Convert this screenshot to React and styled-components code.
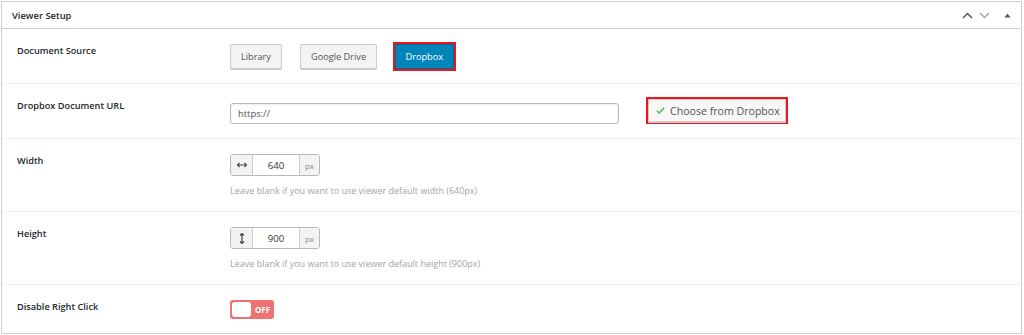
import React from "react";
import styled, { createGlobalStyle } from "styled-components";

const Global = createGlobalStyle`
  html, body { margin: 0; padding: 0; background: #fff; }
  body { font-family: "Open Sans", "Liberation Sans", sans-serif; color: #23282d; }
  * { box-sizing: border-box; }
`;

const Page = styled.div`
  padding: 1px 2px 0 1px;
`;

const Panel = styled.section`
  border: 1px solid #ccd0d4;
  background: #fff;
  width: 1021px;
`;

const Header = styled.header`
  height: 27px;
  border-bottom: 1px solid #ccd0d4;
  display: flex;
  align-items: center;
  justify-content: space-between;
  padding: 0 10px 0 10px;
`;

const Title = styled.h2`
  margin: 0;
  font-size: 9.4px;
  font-weight: 600;
  color: #23282d;
`;

const HeaderTools = styled.div`
  display: flex;
  align-items: center;
  gap: 6px;
`;

const ToolIcon = styled.svg`
  display: block;
  margin-left: ${(p) => p.$ml || 0}px;
`;

const Row = styled.div`
  display: flex;
  align-items: flex-start;
  padding: 15px 0 0 15px;
  border-top: ${(p) => (p.$first ? "none" : "1px solid #f0f0f0")};
  height: ${(p) => p.$h}px;
`;

const Label = styled.div`
  width: 213px;
  flex: none;
  font-size: 9.2px;
  font-weight: 600;
  line-height: 14px;
  color: #23282d;
`;

const Field = styled.div`
  display: flex;
  flex-direction: column;
  align-items: flex-start;
`;

const ButtonGroup = styled.div`
  display: flex;
  align-items: center;
  gap: 18px;
`;

const Marked = styled.div`
  border: 2px solid #f0141b;
  margin: ${(p) => p.$m || "0"};
  display: flex;
`;

const SourceButton = styled.button`
  height: 25px;
  padding: 0 ${(p) => p.$px}px;
  font-family: inherit;
  font-size: 9.2px;
  border-radius: ${(p) => (p.$active ? 0 : 2)}px;
  border: 1px solid ${(p) => (p.$active ? "#006799" : "#ccc")};
  background: ${(p) => (p.$active ? "#0085ba" : "#f3f3f3")};
  color: ${(p) => (p.$active ? "#fff" : "#555")};
  box-shadow: ${(p) => (p.$active ? "none" : "0 1px 0 #ccc")};
`;

const UrlLine = styled.div`
  display: flex;
  align-items: center;
`;

const UrlInput = styled.div`
  width: 389px;
  height: 21px;
  margin-top: 4px;
  border: 1px solid #b4b9be;
  border-radius: 3px;
  box-shadow: inset 0 1px 2px rgba(0, 0, 0, 0.07);
  display: flex;
  align-items: center;
  padding-left: 7px;
  font-size: 9.4px;
  color: #555;
`;

const ChooseButton = styled.button`
  height: 23px;
  padding: 0 5px 0 7px;
  display: flex;
  align-items: center;
  gap: 5px;
  font-family: inherit;
  font-size: 10.6px;
  color: #555;
  background: #f7f7f7;
  border: 1px solid #ccc;
  border-radius: 0;
  box-shadow: 0 1px 0 #ccc;
`;

const InputGroup = styled.div`
  display: flex;
  height: 22px;
  border: 1px solid #b4b9be;
  border-radius: 3px;
  overflow: hidden;
`;

const Addon = styled.div`
  width: ${(p) => p.$w}px;
  background: #f3f3f3;
  display: flex;
  align-items: center;
  justify-content: center;
  font-size: 8px;
  color: #888;
  border-left: ${(p) => (p.$right ? "1px solid #ccc" : "none")};
  border-right: ${(p) => (p.$right ? "none" : "1px solid #ccc")};
`;

const NumberBox = styled.div`
  width: 46px;
  background: #fff;
  display: flex;
  align-items: center;
  justify-content: center;
  font-size: 9.6px;
  color: #333;
`;

const Help = styled.p`
  margin: 8px 0 0;
  font-size: 9px;
  line-height: 14px;
  color: #a0a5aa;
`;

const Toggle = styled.div`
  width: 44px;
  height: 19px;
  border-radius: 3px;
  background: #ef7272;
  display: flex;
  align-items: center;
  padding-left: 2px;
  gap: 4px;
`;

const Knob = styled.div`
  width: 19px;
  height: 15px;
  border-radius: 3px;
  background: #fff;
`;

const ToggleText = styled.span`
  font-size: 8px;
  font-weight: 700;
  color: #fff;
`;

const HorizIcon = () => (
  <svg width="10" height="6" viewBox="0 0 10 6">
    <path d="M0.5 3 H9.5 M2.5 1 L0.5 3 L2.5 5 M7.5 1 L9.5 3 L7.5 5" stroke="#444" strokeWidth="1.1" fill="none" />
  </svg>
);

const VertIcon = () => (
  <svg width="6" height="11" viewBox="0 0 6 11">
    <path d="M3 0.5 V10.5 M1 2.5 L3 0.5 L5 2.5 M1 8.5 L3 10.5 L5 8.5" stroke="#444" strokeWidth="1.2" fill="none" />
  </svg>
);

export default function App() {
  return (
    <>
      <Global />
      <Page>
        <Panel>
          <Header>
            <Title>Viewer Setup</Title>
            <HeaderTools>
              <ToolIcon width="11" height="7" viewBox="0 0 11 7">
                <path d="M1 6 L5.5 1.5 L10 6" stroke="#50575e" strokeWidth="1.5" fill="none" />
              </ToolIcon>
              <ToolIcon width="11" height="7" viewBox="0 0 11 7">
                <path d="M1 1 L5.5 5.5 L10 1" stroke="#a7aaad" strokeWidth="1.5" fill="none" />
              </ToolIcon>
              <ToolIcon $ml={8} width="7" height="5" viewBox="0 0 7 5">
                <path d="M0.5 4.5 L3.5 0.5 L6.5 4.5 Z" fill="#50575e" />
              </ToolIcon>
            </HeaderTools>
          </Header>

          <Row $first $h={54}>
            <Label>Document Source</Label>
            <Field>
              <ButtonGroup>
                <SourceButton $px={10}>Library</SourceButton>
                <SourceButton $px={10}>Google Drive</SourceButton>
                <Marked $m="-2px 0 -2px -2px">
                  <SourceButton $px={9.5} $active>Dropbox</SourceButton>
                </Marked>
              </ButtonGroup>
            </Field>
          </Row>

          <Row $h={55}>
            <Label>Dropbox Document URL</Label>
            <Field>
              <UrlLine>
                <UrlInput>https://</UrlInput>
                <Marked $m="-2px 0 0 27px">
                  <ChooseButton>
                    <svg width="9" height="7" viewBox="0 0 9 7">
                      <path d="M0.8 3.6 L3.2 6 L8.2 0.8" stroke="#46b450" strokeWidth="1.3" fill="none" />
                    </svg>
                    Choose from Dropbox
                  </ChooseButton>
                </Marked>
              </UrlLine>
            </Field>
          </Row>

          <Row $h={73}>
            <Label>Width</Label>
            <Field>
              <InputGroup>
                <Addon $w={22}><HorizIcon /></Addon>
                <NumberBox>640</NumberBox>
                <Addon $w={20} $right>px</Addon>
              </InputGroup>
              <Help>Leave blank if you want to use viewer default width (640px)</Help>
            </Field>
          </Row>

          <Row $h={73}>
            <Label>Height</Label>
            <Field>
              <InputGroup>
                <Addon $w={22}><VertIcon /></Addon>
                <NumberBox>900</NumberBox>
                <Addon $w={20} $right>px</Addon>
              </InputGroup>
              <Help>Leave blank if you want to use viewer default height (900px)</Help>
            </Field>
          </Row>

          <Row $h={49}>
            <Label>Disable Right Click</Label>
            <Field>
              <Toggle>
                <Knob />
                <ToggleText>OFF</ToggleText>
              </Toggle>
            </Field>
          </Row>
        </Panel>
      </Page>
    </>
  );
}
